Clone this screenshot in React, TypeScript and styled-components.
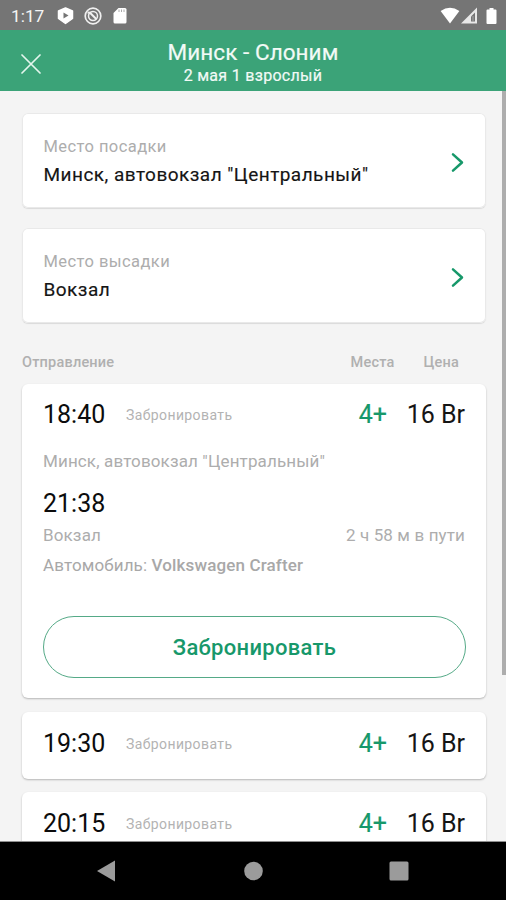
import React from "react";
import styled, { createGlobalStyle } from "styled-components";

const GREEN = "#17986a";

const GlobalStyle = createGlobalStyle`
  * { box-sizing: border-box; }
  body { margin: 0; background: #f4f4f4; font-family: Roboto, "Noto Sans", sans-serif; overflow: hidden; }
`;

const Screen = styled.div`
  width: 506px;
  height: 900px;
  display: flex;
  flex-direction: column;
  overflow: hidden;
  background: #f4f4f4;
`;

const StatusBar = styled.div`
  flex: none;
  height: 30px;
  padding: 1px 8px 0 11px;
  display: flex;
  align-items: center;
  background: #757575;
  color: #f5f5f5;
`;

const Clock = styled.span`
  width: 46px;
  font-size: 17.3px;
  white-space: nowrap;
`;

const StatusIcons = styled.div<{ $gap: number; $end?: boolean }>`
  display: flex;
  align-items: center;
  gap: ${(p) => p.$gap}px;
  margin-left: ${(p) => (p.$end ? "auto" : "0")};
`;

const Header = styled.header`
  flex: none;
  height: 61px;
  display: grid;
  grid-template-columns: 62px 1fr 62px;
  align-items: center;
  background: #3ba378;
  color: #f2faf6;
`;

const CloseButton = styled.button`
  height: 61px;
  padding: 6px 0 0 21px;
  border: 0;
  background: none;
  display: flex;
  align-items: center;
`;

const Heading = styled.div`
  display: flex;
  flex-direction: column;
  align-items: center;
  white-space: nowrap;
  padding-top: 4px;
`;

const Title = styled.h1`
  margin: 0;
  font-size: 22.5px;
  line-height: 26px;
  font-weight: 400;
  letter-spacing: 0.05px;
  -webkit-text-stroke: 0.2px #f2faf6;
`;

const Subtitle = styled.div`
  font-size: 16px;
  line-height: 21px;
  font-weight: 400;
  letter-spacing: 0.3px;
  -webkit-text-stroke: 0.2px #f2faf6;
`;

const Body = styled.div`
  flex: 1;
  min-height: 0;
  display: flex;
  justify-content: space-between;
  overflow: hidden;
  border-bottom: 1px solid #8f8f8f;
`;

const Content = styled.main`
  width: 486px;
  padding: 22px 0 0 22px;
  display: flex;
  flex-direction: column;
`;

const ScrollTrack = styled.div`
  width: 4px;
`;

const ScrollThumb = styled.div`
  height: 584px;
  background: #adadad;
`;

const PlaceCard = styled.button`
  flex: none;
  width: 464px;
  height: 95px;
  margin-bottom: 20px;
  padding: 0 21px 0 21.5px;
  display: flex;
  align-items: center;
  justify-content: space-between;
  border: 0;
  border-radius: 6px;
  background: #fff;
  box-shadow: inset 0 0 0 1px #e9e9e9, 0 1px 1px #dadada;
  font-family: inherit;
  text-align: left;
`;

const PlaceText = styled.div`
  display: flex;
  flex-direction: column;
  white-space: nowrap;
`;

const PlaceLabel = styled.span`
  font-size: 16.5px;
  line-height: 28px;
  letter-spacing: 0.42px;
  color: #adadad;
`;

const PlaceName = styled.span`
  font-size: 19px;
  line-height: 28px;
  letter-spacing: 0.46px;
  color: #151515;
  -webkit-text-stroke: 0.15px #151515;
`;

const ChevronIcon = styled.svg`
  flex: none;
  margin-top: 4px;
`;

const ListHeader = styled.div`
  flex: none;
  height: 41px;
  padding: 12px 27px 0 0;
  display: flex;
  align-items: flex-start;
  font-size: 14.5px;
  line-height: 16px;
  font-weight: 500;
  letter-spacing: 0.2px;
  color: #b0b0b0;
`;

const DepartureLabel = styled.span`
  flex: 1;
`;

const PriceLabel = styled.span`
  margin-left: 29px;
`;

const TripCard = styled.article<{ $height: number; $gap: number }>`
  flex: none;
  width: 464px;
  height: ${(p) => p.$height}px;
  margin-bottom: ${(p) => p.$gap}px;
  padding: 0 21px;
  border-radius: 6px;
  background: #fff;
  box-shadow: 0 1px 2px rgba(0, 0, 0, 0.26);
`;

const TripRow = styled.div<{ $compact?: boolean }>`
  height: ${(p) => (p.$compact ? 64 : 62)}px;
  display: flex;
  align-items: center;
  white-space: nowrap;
`;

const Time = styled.div`
  width: 83px;
  font-size: 25px;
  line-height: 30px;
  color: #0c0c0c;
`;

const Action = styled.span`
  flex: 1;
  font-size: 14px;
  letter-spacing: 0.4px;
  color: #b3b3b3;
`;

const Seats = styled.span`
  font-size: 25px;
  line-height: 30px;
  color: ${GREEN};
  -webkit-text-stroke: 0.2px ${GREEN};
`;

const Price = styled.span`
  width: 78px;
  text-align: right;
  font-size: 25px;
  line-height: 30px;
  color: #151515;
`;

const Muted = styled.div<{ $height: number }>`
  height: ${(p) => p.$height}px;
  padding-bottom: 2px;
  display: flex;
  align-items: center;
  justify-content: space-between;
  font-size: 17px;
  letter-spacing: 0.13px;
  color: #adadad;
  white-space: pre;
`;

const Vehicle = styled.div`
  height: 30px;
  font-size: 17px;
  line-height: 28px;
  letter-spacing: 0.13px;
  color: #a8a8a8;
  white-space: nowrap;

  b { font-weight: 500; }
`;

const Arrival = styled(Time)`
  height: 43px;
  padding-top: 12px;
`;

const BookButton = styled.button`
  width: 423px;
  height: 62px;
  margin-top: 35px;
  border: 1.5px solid #55aa87;
  border-radius: 31px;
  background: #fff;
  color: ${GREEN};
  font-family: inherit;
  font-size: 22px;
  font-weight: 500;
  letter-spacing: 0.3px;
`;

const NavBar = styled.nav`
  flex: none;
  height: 58px;
  display: flex;
  align-items: center;
  justify-content: space-between;
  padding: 0 97px 0 96px;
  background: #000;
`;

const Chevron = () => (
  <ChevronIcon width="14" height="21" viewBox="0 0 14 21" fill="none">
    <path d="M2 2.3 11 10.5 2 18.7" stroke={GREEN} strokeWidth="2.5" strokeLinecap="round" strokeLinejoin="round" />
  </ChevronIcon>
);

const places = [
  { label: "Место посадки", name: 'Минск, автовокзал "Центральный"' },
  { label: "Место высадки", name: "Вокзал" },
];

const Summary = ({ time, compact }: { time: string; compact?: boolean }) => (
  <TripRow $compact={compact}>
    <Time>{time}</Time>
    <Action>Забронировать</Action>
    <Seats>4+</Seats>
    <Price>16 Br</Price>
  </TripRow>
);

export default function App() {
  return (
    <Screen>
      <GlobalStyle />
      <StatusBar>
        <Clock>1:17</Clock>
        <StatusIcons $gap={10}>
          <svg width="17" height="18" viewBox="0 0 17 18">
            <path d="M8.5 1 15.5 4v7.500L8.500 16.500 1.500 11.500V4Z" fill="#fff" stroke="#fff" strokeWidth="1.500" strokeLinejoin="round" />
            <path d="M6.500 5.500v6l5-3z" fill="#757575" />
          </svg>
          <svg width="18" height="18" viewBox="0 0 18 18" fill="none" stroke="#f0f0f0">
            <circle cx="9" cy="9" r="7.800" strokeWidth="1.700" />
            <circle cx="9" cy="9" r="4.500" strokeWidth="1.500" />
            <path d="m3.500 5.500 2.500.200 6.500 6.500" strokeWidth="2" />
          </svg>
          <svg width="16" height="18" viewBox="0 0 16 18">
            <path d="M6.500 1H13q1.500 0 1.500 1.500V15q0 1.500-1.500 1.500H3Q1.500 16.500 1.500 15V6Z" fill="#fff" />
            <path d="M7 2.500v2.500M9.500 2.500v2.500M12 2.500v2.500" stroke="#aaa" strokeWidth="1" />
          </svg>
        </StatusIcons>
        <StatusIcons $gap={1} $end>
          <svg width="20" height="17" viewBox="0 0 20 17">
            <path d="M.600 4Q10-2.600 19.400 4L10 16.500Z" fill="#fff" />
          </svg>
          <svg width="17" height="17" viewBox="0 0 17 17">
            <path d="M16 .500V16.500H0Z" fill="#e8e8e8" />
            <path d="M10 9.500 14 5.500V14.500H10Z" fill="#757575" />
            <path d="M12 9v5" stroke="#aaa" />
          </svg>
          <svg width="19" height="18" viewBox="0 0 19 18">
            <path d="M10.500 1h4v1.500h2q1 0 1 1V16q0 1-1 1h-8q-1 0-1-1V3.500q0-1 1-1h2Z" fill="#fff" />
          </svg>
        </StatusIcons>
      </StatusBar>

      <Header>
        <CloseButton aria-label="Закрыть">
          <svg width="20" height="20" viewBox="0 0 20 20">
            <path d="m1 1 18 18M19 1 1 19" stroke="#e4f5ed" strokeWidth="1.7" strokeLinecap="round" />
          </svg>
        </CloseButton>
        <Heading>
          <Title>Минск - Слоним</Title>
          <Subtitle>2 мая 1 взрослый</Subtitle>
        </Heading>
      </Header>

      <Body>
        <Content>
          {places.map((p) => (
            <PlaceCard key={p.label}>
              <PlaceText>
                <PlaceLabel>{p.label}</PlaceLabel>
                <PlaceName>{p.name}</PlaceName>
              </PlaceText>
              <Chevron />
            </PlaceCard>
          ))}

          <ListHeader>
            <DepartureLabel>Отправление</DepartureLabel>
            <span>Места</span>
            <PriceLabel>Цена</PriceLabel>
          </ListHeader>

          <TripCard $height={314} $gap={14}>
            <Summary time="18:40" />
            <Muted $height={31}>Минск, автовокзал "Центральный"</Muted>
            <Arrival>21:38</Arrival>
            <Muted $height={31}>
              <span>Вокзал</span>
              <span>2 ч 58 м в пути</span>
            </Muted>
            <Vehicle>
              Автомобиль: <b>Volkswagen Crafter</b>
            </Vehicle>
            <BookButton>Забронировать</BookButton>
          </TripCard>
          <TripCard $height={67} $gap={13}>
            <Summary time="19:30" compact />
          </TripCard>
          <TripCard $height={67} $gap={0}>
            <Summary time="20:15" compact />
          </TripCard>
        </Content>
        <ScrollTrack>
          <ScrollThumb />
        </ScrollTrack>
      </Body>

      <NavBar>
        <svg width="20" height="22" viewBox="0 0 20 22">
          <path d="M19 .500v21L1 11Z" fill="#9b9b9b" />
        </svg>
        <svg width="20" height="20" viewBox="0 0 20 20">
          <circle cx="10.5" cy="10" r="9.300" fill="#9b9b9b" />
        </svg>
        <svg width="20" height="20" viewBox="0 0 20 20">
          <rect x=".5" y=".5" width="19" height="19" rx="1.500" fill="#9b9b9b" />
        </svg>
      </NavBar>
    </Screen>
  );
}
